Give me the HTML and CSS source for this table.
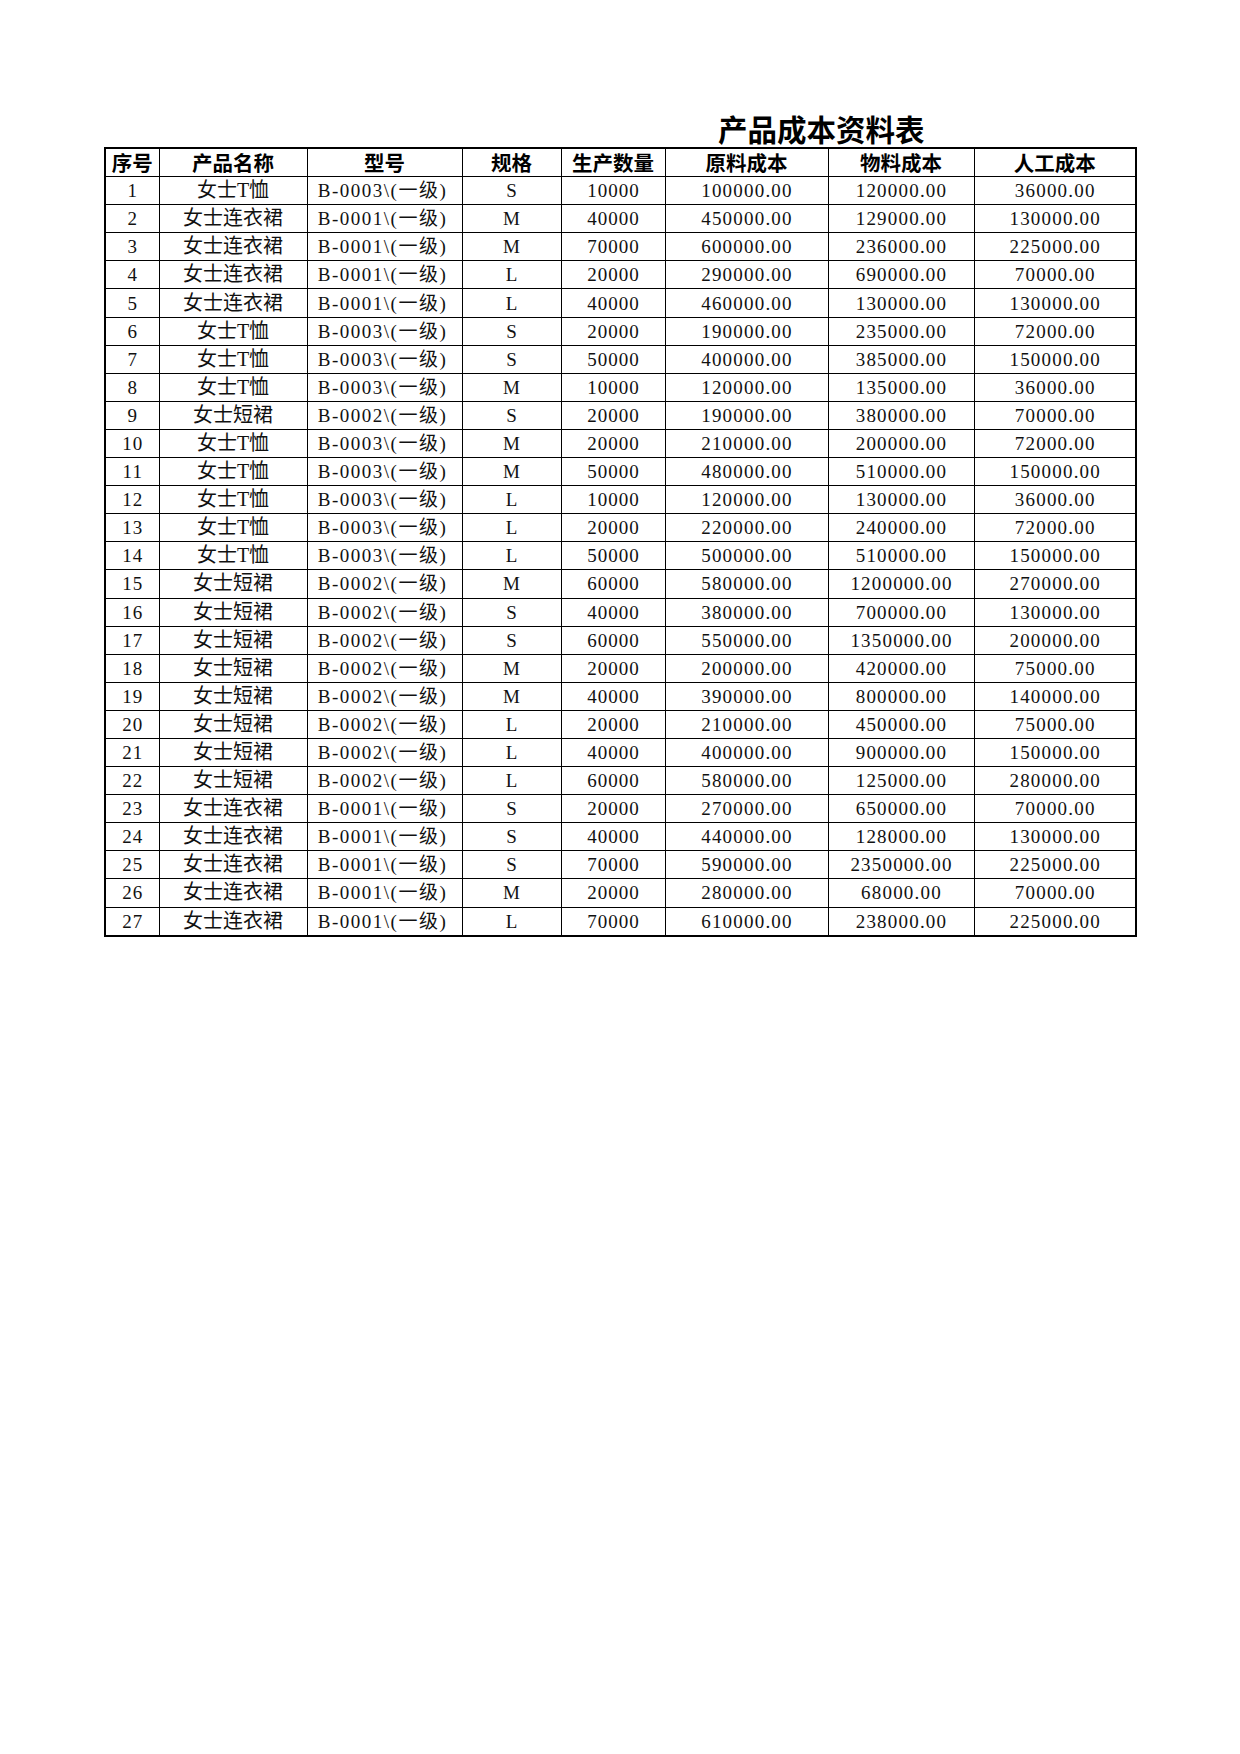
FILE: index.html
```html
<!DOCTYPE html>
<html lang="zh-CN">
<head>
<meta charset="utf-8">
<title>产品成本资料表</title>
<link rel="stylesheet" href="styles.css">
</head>
<body>
<div class="sheet">
  <div class="title">产品成本资料表</div>
  <table class="grid">
    <colgroup>
      <col class="c1"><col class="c2"><col class="c3"><col class="c4"><col class="c5"><col class="c6"><col class="c7"><col class="c8">
    </colgroup>
    <thead>
      <tr><th>序号</th><th>产品名称</th><th>型号</th><th>规格</th><th>生产数量</th><th>原料成本</th><th>物料成本</th><th>人工成本</th></tr>
    </thead>
    <tbody>
      <tr><td class="int">1</td><td class="name">女士T恤</td><td class="model">B-0003\(一级)</td><td>S</td><td class="int">10000</td><td class="num">100000.00</td><td class="num">120000.00</td><td class="num">36000.00</td></tr>
      <tr><td class="int">2</td><td class="name">女士连衣裙</td><td class="model">B-0001\(一级)</td><td>M</td><td class="int">40000</td><td class="num">450000.00</td><td class="num">129000.00</td><td class="num">130000.00</td></tr>
      <tr><td class="int">3</td><td class="name">女士连衣裙</td><td class="model">B-0001\(一级)</td><td>M</td><td class="int">70000</td><td class="num">600000.00</td><td class="num">236000.00</td><td class="num">225000.00</td></tr>
      <tr><td class="int">4</td><td class="name">女士连衣裙</td><td class="model">B-0001\(一级)</td><td>L</td><td class="int">20000</td><td class="num">290000.00</td><td class="num">690000.00</td><td class="num">70000.00</td></tr>
      <tr><td class="int">5</td><td class="name">女士连衣裙</td><td class="model">B-0001\(一级)</td><td>L</td><td class="int">40000</td><td class="num">460000.00</td><td class="num">130000.00</td><td class="num">130000.00</td></tr>
      <tr><td class="int">6</td><td class="name">女士T恤</td><td class="model">B-0003\(一级)</td><td>S</td><td class="int">20000</td><td class="num">190000.00</td><td class="num">235000.00</td><td class="num">72000.00</td></tr>
      <tr><td class="int">7</td><td class="name">女士T恤</td><td class="model">B-0003\(一级)</td><td>S</td><td class="int">50000</td><td class="num">400000.00</td><td class="num">385000.00</td><td class="num">150000.00</td></tr>
      <tr><td class="int">8</td><td class="name">女士T恤</td><td class="model">B-0003\(一级)</td><td>M</td><td class="int">10000</td><td class="num">120000.00</td><td class="num">135000.00</td><td class="num">36000.00</td></tr>
      <tr><td class="int">9</td><td class="name">女士短裙</td><td class="model">B-0002\(一级)</td><td>S</td><td class="int">20000</td><td class="num">190000.00</td><td class="num">380000.00</td><td class="num">70000.00</td></tr>
      <tr><td class="int">10</td><td class="name">女士T恤</td><td class="model">B-0003\(一级)</td><td>M</td><td class="int">20000</td><td class="num">210000.00</td><td class="num">200000.00</td><td class="num">72000.00</td></tr>
      <tr><td class="int">11</td><td class="name">女士T恤</td><td class="model">B-0003\(一级)</td><td>M</td><td class="int">50000</td><td class="num">480000.00</td><td class="num">510000.00</td><td class="num">150000.00</td></tr>
      <tr><td class="int">12</td><td class="name">女士T恤</td><td class="model">B-0003\(一级)</td><td>L</td><td class="int">10000</td><td class="num">120000.00</td><td class="num">130000.00</td><td class="num">36000.00</td></tr>
      <tr><td class="int">13</td><td class="name">女士T恤</td><td class="model">B-0003\(一级)</td><td>L</td><td class="int">20000</td><td class="num">220000.00</td><td class="num">240000.00</td><td class="num">72000.00</td></tr>
      <tr><td class="int">14</td><td class="name">女士T恤</td><td class="model">B-0003\(一级)</td><td>L</td><td class="int">50000</td><td class="num">500000.00</td><td class="num">510000.00</td><td class="num">150000.00</td></tr>
      <tr><td class="int">15</td><td class="name">女士短裙</td><td class="model">B-0002\(一级)</td><td>M</td><td class="int">60000</td><td class="num">580000.00</td><td class="num">1200000.00</td><td class="num">270000.00</td></tr>
      <tr><td class="int">16</td><td class="name">女士短裙</td><td class="model">B-0002\(一级)</td><td>S</td><td class="int">40000</td><td class="num">380000.00</td><td class="num">700000.00</td><td class="num">130000.00</td></tr>
      <tr><td class="int">17</td><td class="name">女士短裙</td><td class="model">B-0002\(一级)</td><td>S</td><td class="int">60000</td><td class="num">550000.00</td><td class="num">1350000.00</td><td class="num">200000.00</td></tr>
      <tr><td class="int">18</td><td class="name">女士短裙</td><td class="model">B-0002\(一级)</td><td>M</td><td class="int">20000</td><td class="num">200000.00</td><td class="num">420000.00</td><td class="num">75000.00</td></tr>
      <tr><td class="int">19</td><td class="name">女士短裙</td><td class="model">B-0002\(一级)</td><td>M</td><td class="int">40000</td><td class="num">390000.00</td><td class="num">800000.00</td><td class="num">140000.00</td></tr>
      <tr><td class="int">20</td><td class="name">女士短裙</td><td class="model">B-0002\(一级)</td><td>L</td><td class="int">20000</td><td class="num">210000.00</td><td class="num">450000.00</td><td class="num">75000.00</td></tr>
      <tr><td class="int">21</td><td class="name">女士短裙</td><td class="model">B-0002\(一级)</td><td>L</td><td class="int">40000</td><td class="num">400000.00</td><td class="num">900000.00</td><td class="num">150000.00</td></tr>
      <tr><td class="int">22</td><td class="name">女士短裙</td><td class="model">B-0002\(一级)</td><td>L</td><td class="int">60000</td><td class="num">580000.00</td><td class="num">125000.00</td><td class="num">280000.00</td></tr>
      <tr><td class="int">23</td><td class="name">女士连衣裙</td><td class="model">B-0001\(一级)</td><td>S</td><td class="int">20000</td><td class="num">270000.00</td><td class="num">650000.00</td><td class="num">70000.00</td></tr>
      <tr><td class="int">24</td><td class="name">女士连衣裙</td><td class="model">B-0001\(一级)</td><td>S</td><td class="int">40000</td><td class="num">440000.00</td><td class="num">128000.00</td><td class="num">130000.00</td></tr>
      <tr><td class="int">25</td><td class="name">女士连衣裙</td><td class="model">B-0001\(一级)</td><td>S</td><td class="int">70000</td><td class="num">590000.00</td><td class="num">2350000.00</td><td class="num">225000.00</td></tr>
      <tr><td class="int">26</td><td class="name">女士连衣裙</td><td class="model">B-0001\(一级)</td><td>M</td><td class="int">20000</td><td class="num">280000.00</td><td class="num">68000.00</td><td class="num">70000.00</td></tr>
      <tr><td class="int">27</td><td class="name">女士连衣裙</td><td class="model">B-0001\(一级)</td><td>L</td><td class="int">70000</td><td class="num">610000.00</td><td class="num">238000.00</td><td class="num">225000.00</td></tr>
    </tbody>
  </table>
</div>
</body>
</html>
```

FILE: styles.css
```css
html, body {
  margin: 0;
  padding: 0;
  background: #ffffff;
}

.sheet {
  margin-left: 104px;
  padding-top: 110px;
  width: 1031px;
}

.title {
  height: 37px;
  line-height: 37px;
  padding-left: 614px;
  font-family: "Noto Sans CJK SC", sans-serif;
  font-weight: 700;
  font-size: 29.5px;
  color: #000;
  white-space: nowrap;
}

.grid {
  border-collapse: collapse;
  table-layout: fixed;
  width: 1031px;
  border: 2px solid #000;
  color: #111;
}

.c1 { width: 54px; }
.c2 { width: 148px; }
.c3 { width: 155px; }
.c4 { width: 99px; }
.c5 { width: 104px; }
.c6 { width: 163px; }
.c7 { width: 146px; }
.c8 { width: 162px; }

.grid th,
.grid td {
  border: 1px solid #000;
  padding: 0;
  height: 27.1px;
  text-align: center;
  vertical-align: middle;
  white-space: nowrap;
  overflow: hidden;
}

.grid th {
  font-family: "Noto Sans CJK SC", sans-serif;
  font-weight: 700;
  font-size: 20.5px;
  line-height: 27px;
  color: #000;
}

.grid td {
  font-family: "Liberation Serif", "Noto Sans CJK SC", serif;
  font-weight: 400;
  font-size: 19px;
  line-height: 27px;
}

.grid td.name {
  font-size: 20px;
}

.grid td.model {
  letter-spacing: 1.5px;
  padding-right: 4px;
}

.grid td.int {
  letter-spacing: 1px;
  padding-left: 1px;
}

.grid td.num {
  letter-spacing: 1.2px;
  padding-left: 1px;
}
```
